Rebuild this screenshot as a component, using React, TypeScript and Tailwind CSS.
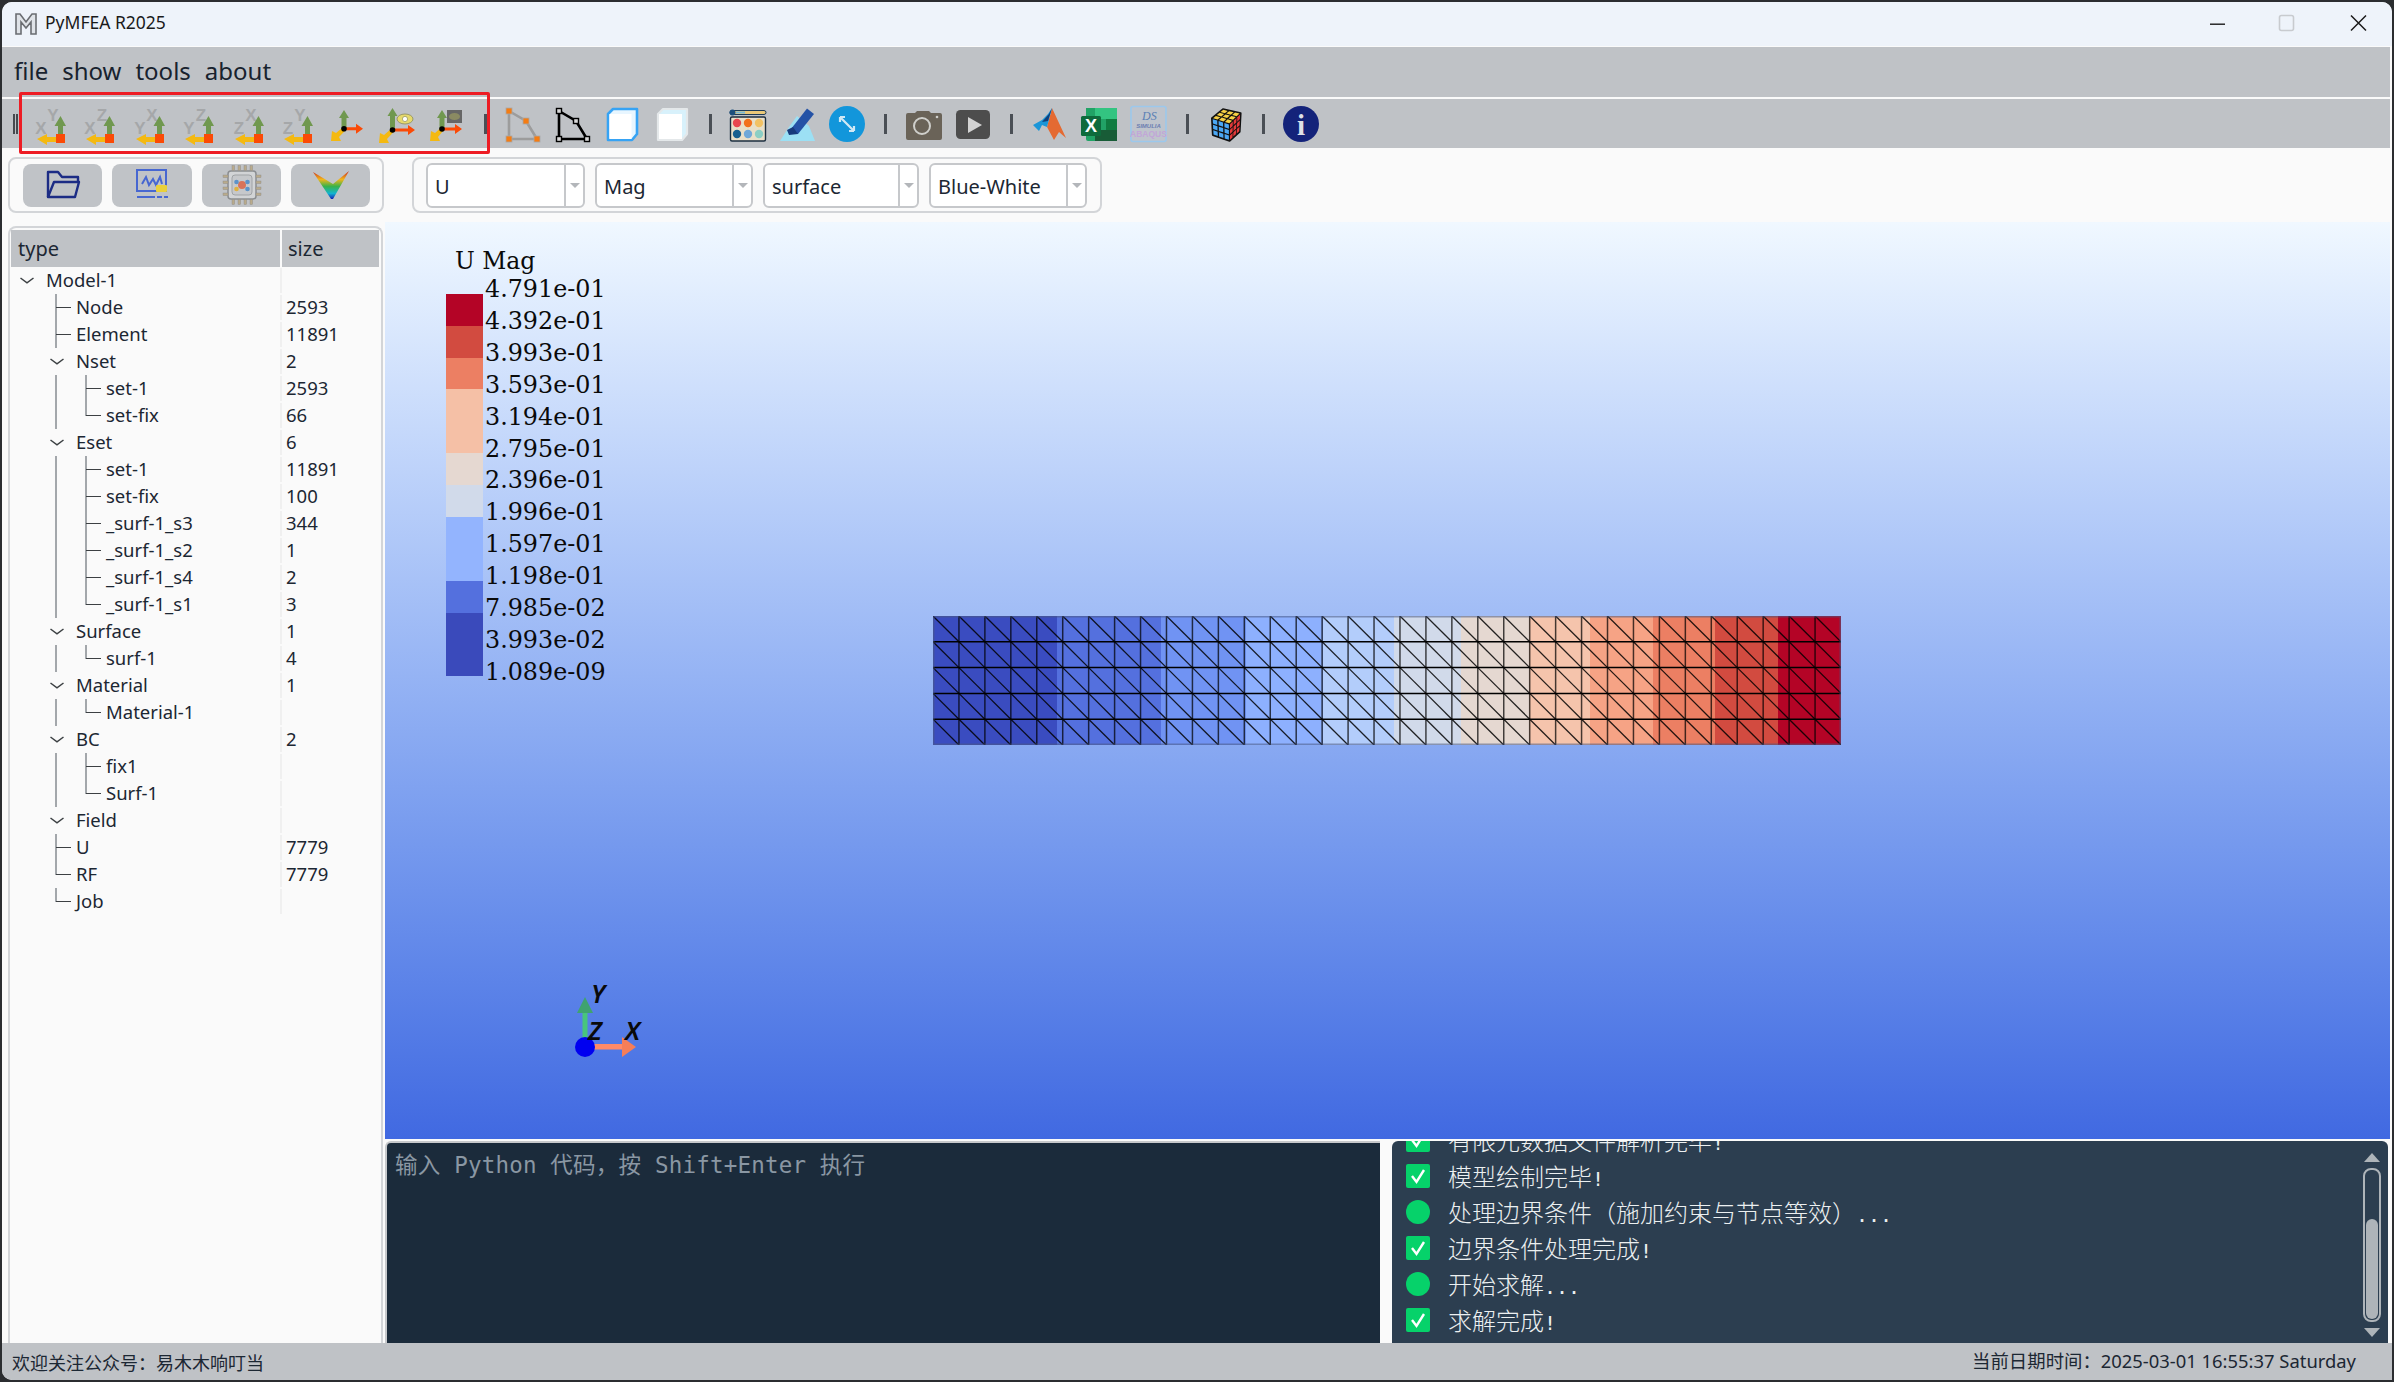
import React from "react";

type Cell = "e" | "v" | "t" | "l" | "o";
const TREE: [string, string, Cell[]][] = [
  ["Model-1", "", ["o"]],
  ["Node", "2593", ["e", "t"]],
  ["Element", "11891", ["e", "t"]],
  ["Nset", "2", ["e", "o"]],
  ["set-1", "2593", ["e", "v", "t"]],
  ["set-fix", "66", ["e", "v", "l"]],
  ["Eset", "6", ["e", "o"]],
  ["set-1", "11891", ["e", "v", "t"]],
  ["set-fix", "100", ["e", "v", "t"]],
  ["_surf-1_s3", "344", ["e", "v", "t"]],
  ["_surf-1_s2", "1", ["e", "v", "t"]],
  ["_surf-1_s4", "2", ["e", "v", "t"]],
  ["_surf-1_s1", "3", ["e", "v", "l"]],
  ["Surface", "1", ["e", "o"]],
  ["surf-1", "4", ["e", "v", "l"]],
  ["Material", "1", ["e", "o"]],
  ["Material-1", "", ["e", "v", "l"]],
  ["BC", "2", ["e", "o"]],
  ["fix1", "", ["e", "v", "t"]],
  ["Surf-1", "", ["e", "v", "l"]],
  ["Field", "", ["e", "o"]],
  ["U", "7779", ["e", "t"]],
  ["RF", "7779", ["e", "l"]],
  ["Job", "", ["e", "l"]],
];

function Branch({ k }: { k: Cell }) {
  return (
    <svg width="30" height="27" className="shrink-0">
      {k === "o" && <path d="M9.5 11L16 15.8L22.5 11" fill="none" stroke="#3c4043" strokeWidth="1.5" />}
      {(k === "v" || k === "t") && <rect x="14" y="0" width="2" height="27" fill="#a3a7ab" />}
      {k === "l" && <rect x="14" y="0" width="2" height="14" fill="#a3a7ab" />}
      {(k === "t" || k === "l") && <rect x="15" y="13" width="15" height="1" fill="#3c4043" />}
    </svg>
  );
}

function TreeRow({ label, size, cells }: { label: string; size: string; cells: Cell[] }) {
  return (
    <div className="flex h-[27px] items-center text-[18.5px] text-[#1c2733]">
      <div className="flex h-full w-[269px] items-center">
        {cells.map((c, i) => (
          <Branch key={i} k={c} />
        ))}
        <span className="pl-[5px] leading-none">{label}</span>
      </div>
      <div className="h-[25px] w-[2px] bg-[#f0f0f0]" />
      <span className="pl-[4px] leading-none">{size}</span>
    </div>
  );
}

const AXES: [string, string][] = [
  ["Y", "X"],
  ["Z", "X"],
  ["X", "Y"],
  ["Z", "Y"],
  ["X", "Z"],
  ["Y", "Z"],
];

function AxisPlane({ top, left }: { top: string; left: string }) {
  return (
    <svg width="44" height="44" viewBox="0 0 44 44">
      <text x="24" y="19" textAnchor="middle" fontSize="17" fontWeight="700" fill="#a5a7a9" fontFamily="Liberation Sans">{top}</text>
      <text x="12" y="32" textAnchor="middle" fontSize="17" fontWeight="700" fill="#a5a7a9" fontFamily="Liberation Sans">{left}</text>
      <path d="M29 36V24H25.5L31.5 14L37 24H34V36Z" fill="#70984f" />
      <path d="M8 37L18 32V35H30V40H18V43Z" fill="#f4b911" />
      <rect x="27" y="32" width="9" height="9" fill="#fb4a06" />
    </svg>
  );
}

function Triad({ ox, oy, up = 8, rx = 37, dx = 5, dy = 39 }: { ox: number; oy: number; up?: number; rx?: number; dx?: number; dy?: number }) {
  return (
    <>
      <path d={`M${ox - 2.5} ${oy}V${up + 8}H${ox - 5}L${ox} ${up}L${ox + 5} ${up + 8}H${ox + 2.5}V${oy}Z`} fill="#70984f" />
      <path d={`M${ox} ${oy - 1.5}H${rx - 7}V${oy - 5}L${rx} ${oy}L${rx - 7} ${oy + 5}V${oy + 1.5}H${ox}Z`} fill="#fb4a06" />
      <path d={`M${ox - 1} ${oy - 1.5}L${dx + 5} ${dy - 8}L${dx + 1} ${dy - 10}L${dx} ${dy}L${dx + 10} ${dy}L${dx + 8} ${dy - 4}L${ox + 1.5} ${oy + 1.5}Z`} fill="#f4b911" />
      <circle cx={ox} cy={oy} r="2.8" fill="#000" />
    </>
  );
}

function Square({ x, y, black }: { x: number; y: number; black?: boolean }) {
  return black ? (
    <rect x={x - 2.5} y={y - 2.5} width="5" height="5" fill="#d8d8d8" stroke="#000" strokeWidth="1.4" />
  ) : (
    <rect x={x - 3} y={y - 3} width="6" height="6" fill="#f57c12" stroke="#a8a8a8" strokeWidth="0.8" />
  );
}

function Svg({ children }: { children: React.ReactNode }) {
  return (
    <svg width="44" height="44" viewBox="0 0 44 44">
      {children}
    </svg>
  );
}

type P = [number, number];
function Face({ a, b, c, d, fill }: { a: P; b: P; c: P; d: P; fill: string }) {
  // a-b top edge, d-c bottom edge; a 3x3 grid of stickers
  const at = (u: number, v: number): string => {
    const x = (1 - v) * ((1 - u) * a[0] + u * b[0]) + v * ((1 - u) * d[0] + u * c[0]);
    const y = (1 - v) * ((1 - u) * a[1] + u * b[1]) + v * ((1 - u) * d[1] + u * c[1]);
    return `${x.toFixed(1)},${y.toFixed(1)}`;
  };
  const cells: React.ReactNode[] = [];
  const g = 0.04;
  for (let i = 0; i < 3; i++)
    for (let j = 0; j < 3; j++) {
      const u0 = i / 3 + g, u1 = (i + 1) / 3 - g, v0 = j / 3 + g, v1 = (j + 1) / 3 - g;
      cells.push(<polygon key={`${i}${j}`} points={`${at(u0, v0)} ${at(u1, v0)} ${at(u1, v1)} ${at(u0, v1)}`} fill={fill} />);
    }
  return <>{cells}</>;
}

const POLY = "8,9 25,19 36,37 8,37";

const ICON1 = (
  <Svg>
    <polygon points={POLY} fill="none" stroke="#9c9c9c" strokeWidth="2.6" />
    <Square x={8} y={9} /><Square x={25} y={19} /><Square x={36} y={37} /><Square x={8} y={37} />
  </Svg>
);
const ICON2 = (
  <Svg>
    <polygon points={POLY} fill="none" stroke="#000" strokeWidth="2.6" />
    <Square x={8} y={9} black /><Square x={25} y={19} black /><Square x={36} y={37} black /><Square x={8} y={37} black />
  </Svg>
);
const ICON3 = (
  <Svg>
    <path d="M8 12L13 7H37V32L32 38H8Z" fill="#e8f6ff" stroke="#36a3f4" strokeWidth="2.6" strokeLinejoin="round" />
    <rect x="9.5" y="12" width="22" height="25" fill="#fff" />
  </Svg>
);
const ICON4 = (
  <Svg>
    <path d="M8 12L13 7H37V32L32 38H8Z" fill="#d8f1fb" stroke="#e4e8ea" strokeWidth="2.2" strokeLinejoin="round" />
    <rect x="9" y="12" width="23" height="25" fill="#fff" />
  </Svg>
);
const ICON5 = (
  <Svg>
    <rect x="4" y="8.5" width="36" height="4" rx="2" fill="#e9c878" stroke="#1c3b57" strokeWidth="1" />
    <circle cx="6.5" cy="10.5" r="3" fill="#1c4f7d" />
    <rect x="10" y="9.5" width="9" height="2" fill="#77b7d6" />
    <rect x="4.5" y="15" width="35" height="24" rx="1.5" fill="#e8dfc8" stroke="#1c2f40" strokeWidth="1.4" />
    <circle cx="11" cy="21" r="4.2" fill="#e8474f" /><circle cx="22" cy="21" r="4.2" fill="#f2711c" /><circle cx="33" cy="21" r="4.2" fill="#f2c264" />
    <circle cx="11" cy="32" r="4.2" fill="#18608f" /><circle cx="22" cy="32" r="4.2" fill="#6fa8d8" /><circle cx="33" cy="32" r="4.2" fill="#8ccfc4" />
  </Svg>
);
const ICON6 = (
  <Svg>
    <path d="M13 25L21 14L33 24L39 39H4Z" fill="#9ce0f4" />
    <path d="M15 27L31 6.5L38 12L22 32L15 32Z" fill="#2452a6" />
    <path d="M11 28L17 25L22 32L13 33Z" fill="#173a7c" />
  </Svg>
);
const ICON7 = (
  <Svg>
    <ellipse cx="22" cy="22" rx="18" ry="18" fill="#1296db" />
    <path d="M15 15L29 29M15 15V20M15 15H20M29 29V24M29 29H24" fill="none" stroke="#cfe8f5" strokeWidth="2.2" />
  </Svg>
);
const ICON8 = (
  <Svg>
    <path d="M4 13Q4 11 6 11H13L15 9H27L29 11H38Q40 11 40 13V36Q40 38 38 38H6Q4 38 4 36Z" fill="#6a6358" />
    <circle cx="20" cy="24" r="8" fill="none" stroke="#cfcfcb" strokeWidth="2" />
    <circle cx="35" cy="15" r="1.3" fill="#cfcfcb" />
  </Svg>
);
const ICON9 = (
  <Svg>
    <rect x="5" y="8" width="34" height="29" rx="4.5" fill="#4d4d4d" />
    <path d="M17 15L31 23L17 31Z" fill="#d3d3d3" />
  </Svg>
);
const ICON10 = (
  <Svg>
    <path d="M24 6L38 36L31 30L26 38L19 25Z" fill="#e46a32" />
    <path d="M5 23L14 18L20 12L24 6L19 25L14 23L11 29Z" fill="#1b96d8" />
    <path d="M14 20L21 12L24 6L20 19Z" fill="#103f7c" />
  </Svg>
);
const ICON11 = (
  <Svg>
    <path d="M9 6H38Q40 6 40 8V37Q40 39 38 39H11Q9 39 9 37Z" fill="#21a366" />
    <rect x="18" y="6" width="22" height="11" fill="#33c481" />
    <rect x="18" y="28" width="22" height="11" fill="#185c37" />
    <rect x="29" y="17" width="11" height="11" fill="#107c41" />
    <rect x="4" y="14" width="20" height="20" rx="1.5" fill="#0e6b3c" />
    <text x="14" y="30" textAnchor="middle" fontSize="18" fontWeight="700" fill="#fff" fontFamily="Liberation Sans">X</text>
  </Svg>
);
const ICON12 = (
  <Svg>
    <rect x="4" y="4.5" width="35" height="35" rx="2" fill="#bfc4cc" stroke="#9cc8ec" strokeWidth="1.6" />
    <text x="15" y="18" fontSize="12" fontStyle="italic" fill="#5a7fb5" fontFamily="Liberation Serif">DS</text>
    <text x="21.5" y="26" textAnchor="middle" fontSize="6" fontStyle="italic" fontWeight="700" fill="#6c7fb2" fontFamily="Liberation Sans">SIMULIA</text>
    <text x="21.5" y="35" textAnchor="middle" fontSize="8.5" fontWeight="700" fill="#c2a6d8" fontFamily="Liberation Sans">ABAQUS</text>
  </Svg>
);
const ICON13 = (
  <Svg>
    <polygon points="9,16.3 20,7.3 37.6,11.3 36.6,29.7 26.6,38.7 9.9,33" fill="#111" stroke="#111" strokeWidth="2" strokeLinejoin="round" />
    <Face a={[20, 7.3]} b={[37.6, 11.3]} c={[26.6, 22]} d={[9, 16.3]} fill="#f5cf45" />
    <Face a={[9, 16.3]} b={[26.6, 22]} c={[26.6, 38.7]} d={[9.9, 33]} fill="#4ba8f5" />
    <Face a={[26.6, 22]} b={[37.6, 11.3]} c={[36.6, 29.7]} d={[26.6, 38.7]} fill="#e5393a" />
  </Svg>
);
const ICON14 = (
  <Svg>
    <circle cx="21" cy="22" r="18" fill="#14237a" />
    <text x="21" y="33" textAnchor="middle" fontSize="29" fontWeight="700" fill="#dfe1e8" fontFamily="Liberation Serif">i</text>
  </Svg>
);

function TB({ children }: { children: React.ReactNode }) {
  return <div className="flex h-full w-[49.5px] shrink-0 items-center justify-center">{children}</div>;
}
function Sep({ w = "w-[27px]" }: { w?: string }) {
  return (
    <div className={`flex h-full shrink-0 items-center justify-center ${w}`}>
      <div className="h-[20px] w-[3px] bg-[#4a4f55]" />
    </div>
  );
}

function Combo({ label, w }: { label: string; w: string }) {
  return (
    <div className={`flex h-[45px] items-center rounded-[6px] border-2 border-[#c6c8cb] bg-white ${w}`}>
      <span className="flex-1 pl-[7px] pt-[3px] text-[20px] leading-none text-[#1c2733]">{label}</span>
      <div className="flex h-full w-[19px] items-center justify-center border-l-2 border-[#c6c8cb]">
        <div className="h-0 w-0 border-x-[5px] border-t-[5px] border-x-transparent border-t-[#b3b6ba]" />
      </div>
    </div>
  );
}

function SideBtn({ w, children }: { w: string; children: React.ReactNode }) {
  return <div className={`flex h-[43px] items-center justify-center rounded-[8px] bg-[#c0c3c7] ${w}`}>{children}</div>;
}

const BANDS: [number, number, string][] = [
  [933, 1057, "#3a4cc0"],
  [1057, 1161, "#5470de"],
  [1161, 1246, "#7093f3"],
  [1246, 1323, "#8db0fe"],
  [1323, 1394, "#b3cdfb"],
  [1394, 1461, "#d1daea"],
  [1461, 1529, "#e5d8d1"],
  [1529, 1590, "#f5c4ac"],
  [1590, 1653, "#f6a385"],
  [1653, 1715, "#ec7f63"],
  [1715, 1778, "#d24b40"],
  [1778, 1841, "#b40426"],
];

function Mesh() {
  const cols = 35;
  const rows = 5;
  const W = 908;
  const H = 129;
  const cw = W / cols;
  const ch = H / rows;
  const lines: React.ReactNode[] = [];
  for (let i = 1; i < cols; i++) lines.push(<line key={`v${i}`} x1={i * cw} y1={0} x2={i * cw} y2={H} stroke="#000" strokeOpacity="0.72" strokeWidth="1.5" />);
  for (let j = 1; j < rows; j++) lines.push(<line key={`h${j}`} x1={0} y1={j * ch} x2={W} y2={j * ch} stroke="#000" strokeWidth="1.5" />);
  for (let i = 0; i < cols; i++)
    for (let j = 0; j < rows; j++)
      lines.push(<line key={`d${i}-${j}`} x1={i * cw} y1={j * ch} x2={(i + 1) * cw} y2={(j + 1) * ch} stroke="#000" strokeOpacity="0.85" strokeWidth="1.3" />);
  return (
    <svg width={W} height={H} viewBox={`0 0 ${W} ${H}`} className="absolute left-[548px] top-[394px]">
      {BANDS.map(([a, b, c]) => (
        <rect key={a} x={a - 933} y={0} width={b - a + 0.5} height={H} fill={c} />
      ))}
      {lines}
      <rect x="0.75" y="0.75" width={W - 1.5} height={H - 1.5} fill="none" stroke="#4a5a80" strokeOpacity="0.55" strokeWidth="1.5" />
    </svg>
  );
}

const LEG = ["4.791e-01", "4.392e-01", "3.993e-01", "3.593e-01", "3.194e-01", "2.795e-01", "2.396e-01", "1.996e-01", "1.597e-01", "1.198e-01", "7.985e-02", "3.993e-02", "1.089e-09"];
const LEGC: [string, string][] = [
  ["#b40426", "h-[32px]"],
  ["#d24b40", "h-[32px]"],
  ["#ec7f63", "h-[31px]"],
  ["#f5c0a6", "h-[64px]"],
  ["#e5d8d1", "h-[32px]"],
  ["#d1daea", "h-[32px]"],
  ["#93b4fe", "h-[64px]"],
  ["#5470de", "h-[32px]"],
  ["#3a4abb", "h-[63px]"],
];

function Legend() {
  return (
    <>
      <div className="absolute left-[70px] top-[24px] font-['DejaVu_Serif',serif] text-[23.5px] leading-[30px] text-[#0a0a0a]">U Mag</div>
      <div className="absolute left-[61px] top-[72px] flex w-[37px] flex-col">
        {LEGC.map(([c, h], i) => (
          <div key={i} className={h} style={{ backgroundColor: c }} />
        ))}
      </div>
      <div className="absolute left-[100px] top-[52px] flex flex-col font-['DejaVu_Serif',serif] text-[23.8px] text-[#0a0a0a]">
        {LEG.map((t) => (
          <div key={t} className="flex h-[31.9px] items-center leading-none">{t}</div>
        ))}
      </div>
    </>
  );
}

function Triad3D() {
  return (
    <svg width="90" height="90" viewBox="0 0 90 90" className="absolute left-[180px] top-[762px] overflow-visible">
      <rect x="17.5" y="28" width="5" height="34" fill="#48c47c" />
      <path d="M12 29L20 13L28 29Z" fill="#3fa36f" />
      <rect x="25" y="60" width="35" height="5.5" fill="#ff8a68" />
      <path d="M57 53L71 63L57 73Z" fill="#f67e58" />
      <circle cx="20" cy="63" r="10" fill="#0000f0" />
      <text x="26" y="19" fontSize="26" fontStyle="italic" fontWeight="600" fill="#0a0a0a" fontFamily="Noto Sans">Y</text>
      <text x="23" y="56" fontSize="26" fontStyle="italic" fontWeight="600" fill="#0a0a0a" fontFamily="Noto Sans">Z</text>
      <text x="60" y="56" fontSize="26" fontStyle="italic" fontWeight="600" fill="#0a0a0a" fontFamily="Noto Sans">X</text>
    </svg>
  );
}

function Check() {
  return (
    <svg width="24" height="24" viewBox="0 0 24 24" className="shrink-0">
      <rect width="24" height="24" rx="2" fill="#06d26a" />
      <path d="M6 12L10.5 18L18 6" fill="none" stroke="#fff" strokeWidth="2.4" />
    </svg>
  );
}
function Dot() {
  return <div className="h-[24px] w-[24px] shrink-0 rounded-full bg-[#06d26a]" />;
}

const LOG: [boolean, string, string][] = [
  [true, "有限元数据文件解析完毕", "!"],
  [true, "模型绘制完毕", "!"],
  [false, "处理边界条件（施加约束与节点等效）", "..."],
  [true, "边界条件处理完成", "!"],
  [false, "开始求解", "..."],
  [true, "求解完成", "!"],
];

export default function App() {
  return (
    <div className="h-[1382px] w-[2394px] overflow-hidden bg-[#2b2d30] pb-[2px] pl-[2px] pr-[2px] pt-[2px] font-['Noto_Sans','Noto_Sans_CJK_SC',sans-serif]">
      <div className="flex h-full w-full flex-col overflow-hidden rounded-t-[10px] rounded-bl-[10px] bg-[#fafafa]">
        {/* title bar */}
        <div className="flex h-[44px] shrink-0 items-center bg-[#eef3fa]">
          <svg width="24" height="24" viewBox="0 0 24 24" className="ml-[12px]">
            <path d="M2 22V2H6L12 10L18 2H22V22H17V10L12 16L7 10V22Z" fill="#dfe3e8" stroke="#6a6d72" strokeWidth="1.6" />
          </svg>
          <span className="mb-[2px] ml-[7px] text-[17.5px] leading-none text-[#1a1a1a]">PyMFEA R2025</span>
          <div className="flex-1" />
          <svg width="184" height="44" viewBox="0 0 184 44" className="mr-[22px]">
            <rect x="24" y="21.5" width="15" height="1.4" fill="#1a1a1a" />
            <rect x="93.5" y="13.5" width="14" height="15" rx="2" fill="none" stroke="#c8cbcf" strokeWidth="1.6" />
            <path d="M165 13.5L180 28.5M180 13.5L165 28.5" stroke="#1a1a1a" strokeWidth="1.5" />
          </svg>
        </div>
        {/* menu */}
        <div className="mr-[2px] mt-[1px] flex h-[50px] shrink-0 items-center gap-[14px] bg-[#bfc2c6] pb-[2px] pl-[12px] text-[24px] leading-none text-[#18222e]">
          <span>file</span>
          <span>show</span>
          <span>tools</span>
          <span>about</span>
        </div>
        {/* toolbar */}
        <div className="relative mr-[2px] mt-[2px] flex h-[49px] shrink-0 items-center bg-[#bfc2c6]">
          <div className="flex h-full w-[24px] shrink-0 items-center gap-[1px] pl-[11px]">
            <div className="h-[20px] w-[2px] bg-[#45494e]" />
            <div className="h-[20px] w-[2px] bg-[#45494e]" />
          </div>
          {AXES.map(([t, l]) => (
            <TB key={t + l}><AxisPlane top={t} left={l} /></TB>
          ))}
          <TB><Svg><Triad ox={18} oy={26.7} /></Svg></TB>
          <TB>
            <Svg>
              <Triad ox={17.5} oy={28} up={6} rx={40} dx={4} dy={41} />
              <ellipse cx="30" cy="17" rx="8" ry="5" fill="#e6d96c" stroke="#8a8a5a" strokeWidth="0.8" />
              <circle cx="30" cy="17" r="2.6" fill="#fff" stroke="#9a9a60" strokeWidth="0.8" />
            </Svg>
          </TB>
          <TB>
            <Svg>
              <Triad ox={17} oy={27} />
              <rect x="22" y="8" width="15" height="13" fill="#666" />
              <ellipse cx="29.5" cy="14.5" rx="5.5" ry="3.6" fill="#8a8a62" />
            </Svg>
          </TB>
          <Sep w="w-[27px]" />
          <TB>{ICON1}</TB>
          <TB>{ICON2}</TB>
          <TB>{ICON3}</TB>
          <TB>{ICON4}</TB>
          <Sep />
          <TB>{ICON5}</TB>
          <TB>{ICON6}</TB>
          <TB>{ICON7}</TB>
          <Sep />
          <TB>{ICON8}</TB>
          <TB>{ICON9}</TB>
          <Sep />
          <TB>{ICON10}</TB>
          <TB>{ICON11}</TB>
          <TB>{ICON12}</TB>
          <Sep />
          <TB>{ICON13}</TB>
          <Sep />
          <TB>{ICON14}</TB>
          {/* red annotation rectangle */}
          <div className="absolute left-[17px] top-[-7px] h-[62px] w-[471px] rounded-[2px] border-[3px] border-[#ed1c24]" />
        </div>
        {/* controls strip */}
        <div className="flex h-[74px] shrink-0 items-center pl-[6px]">
          <div className="flex h-[56px] w-[376px] items-center gap-[10px] rounded-[8px] border-2 border-[#d3d5d8] pl-[13px]">
            <SideBtn w="w-[79px]">
              <svg width="36" height="32" viewBox="0 0 36 32" fill="none" stroke="#1c2c85" strokeWidth="2.4" strokeLinejoin="round">
                <path d="M3 28V3H13L17 8H33V13" />
                <path d="M3 28L9 13H34L30 28Z" />
              </svg>
            </SideBtn>
            <SideBtn w="w-[80px]">
              <svg width="36" height="34" viewBox="0 0 36 34">
                <rect x="3" y="2" width="29" height="21" fill="none" stroke="#4767d1" strokeWidth="2" />
                <path d="M8 16L12 9L15 17L19 11L22 17L26 9L28 16" fill="none" stroke="#4767d1" strokeWidth="2" />
                <rect x="22" y="17" width="11" height="7" rx="1" fill="#ead03a" />
                <rect x="3" y="28" width="18" height="2" fill="#4767d1" />
                <rect x="23" y="28" width="5" height="2" fill="#4767d1" />
                <rect x="30" y="28" width="4" height="2" fill="#4767d1" />
              </svg>
            </SideBtn>
            <SideBtn w="w-[79px]">
              <svg width="40" height="42" viewBox="0 0 40 42">
                <rect x="6" y="7" width="28" height="28" rx="3" fill="#d2d4d6" stroke="#8a8d90" strokeWidth="1.5" />
                <rect x="10" y="11" width="20" height="20" rx="3" fill="#c6c8cb" stroke="#a0a3a6" />
                {[0, 1, 2, 3].map((i) => (
                  <React.Fragment key={i}>
                    <rect x={10 + i * 6} y="1.5" width="2.6" height="5" fill="#b9ab8b" stroke="#888" strokeWidth="0.4" />
                    <rect x={10 + i * 6} y="35.5" width="2.6" height="5" fill="#b9ab8b" stroke="#888" strokeWidth="0.4" />
                    <rect x="1" y={11 + i * 6} width="5" height="2.6" fill="#b9ab8b" stroke="#888" strokeWidth="0.4" />
                    <rect x="34" y={11 + i * 6} width="5" height="2.6" fill="#b9ab8b" stroke="#888" strokeWidth="0.4" />
                  </React.Fragment>
                ))}
                <circle cx="20" cy="21" r="4" fill="#d8735a" />
                <circle cx="14.5" cy="18" r="2.3" fill="#5c93c9" />
                <circle cx="25.5" cy="18" r="2.3" fill="#5c93c9" />
                <circle cx="14.5" cy="25" r="2.3" fill="#e0b13f" />
                <circle cx="25.5" cy="25" r="2.3" fill="#5c93c9" />
              </svg>
            </SideBtn>
            <SideBtn w="w-[79px]">
              <svg width="38" height="30" viewBox="0 0 38 30">
                <defs>
                  <linearGradient id="vg" x1="0" y1="0" x2="0" y2="1">
                    <stop offset="0" stopColor="#c8281e" />
                    <stop offset="0.3" stopColor="#f2b51c" />
                    <stop offset="0.55" stopColor="#37b34a" />
                    <stop offset="0.8" stopColor="#13b5cf" />
                    <stop offset="1" stopColor="#1020b8" />
                  </linearGradient>
                </defs>
                <path d="M1 2L21 14L37 1L21 29H19Z" fill="url(#vg)" />
              </svg>
            </SideBtn>
          </div>
          <div className="ml-[28px] flex h-[56px] w-[690px] items-center gap-[10px] rounded-[8px] border-2 border-[#d3d5d8] pl-[12px]">
            <Combo label="U" w="w-[159px]" />
            <Combo label="Mag" w="w-[158px]" />
            <Combo label="surface" w="w-[156px]" />
            <Combo label="Blue-White" w="w-[158px]" />
          </div>
        </div>
        {/* main */}
        <div className="mr-[2px] flex min-h-0 flex-1">
          <div className="w-[383px] shrink-0 pl-[6px] pt-[4px]">
            <div className="h-full w-[375px] rounded-t-[8px] border-x-2 border-t-2 border-[#d3d5d8] pl-[1px] pt-[2px]">
              <div className="flex h-[37px] gap-[2px] text-[20px] leading-none text-[#1c2733]">
                <div className="flex w-[269px] items-center bg-[#bfc2c6] pl-[7px]">type</div>
                <div className="flex w-[97px] items-center bg-[#bfc2c6] pl-[6px]">size</div>
              </div>
              {TREE.map((r, i) => (
                <TreeRow key={i} label={r[0]} size={r[1]} cells={r[2]} />
              ))}
            </div>
          </div>
          <div className="flex min-w-0 flex-1 flex-col">
            <div className="relative flex-1 bg-gradient-to-b from-[#f0f8ff] to-[#4169e1]">
              <Legend />
              <Mesh />
              <Triad3D />
            </div>
            <div className="mt-[2px] flex h-[202px] shrink-0">
              <div className="w-[995px] rounded-tl-[6px] border-l-2 border-t-2 border-[#c6c8cb] bg-[#1b2b3b] pl-[8px] pt-[9px] font-['DejaVu_Sans_Mono','Noto_Sans_CJK_SC',monospace] text-[22.5px] leading-[26px] tracking-[0.2px] text-[#8a97a3]">
                输入 Python 代码，按 Shift+Enter 执行
              </div>
              <div className="ml-[12px] flex w-[996px] overflow-hidden rounded-t-[6px] bg-[#2c3e50]">
                <div className="mt-[-19px] flex-1 pl-[14px]">
                  {LOG.map(([ok, t, tail], i) => (
                    <div key={i} className="flex h-[36px] items-center gap-[18px]">
                      {ok ? <Check /> : <Dot />}
                      <span className="font-['Noto_Sans_CJK_SC',sans-serif] text-[24px] font-light leading-none text-[#ecf0f1]">
                        {t}
                        <span className="font-['DejaVu_Sans_Mono',monospace] text-[20px]">{tail}</span>
                      </span>
                    </div>
                  ))}
                </div>
                <div className="flex w-[25px] shrink-0 flex-col items-center pr-[7px] pt-[12px]">
                  <div className="h-0 w-0 border-x-[8px] border-b-[9px] border-x-transparent border-b-[#aeb4b9]" />
                  <div className="mt-[6px] flex h-[154px] w-[18px] flex-col justify-end rounded-[8px] border-2 border-[#aeb4b9] p-px">
                    <div className="h-[100px] w-full rounded-[6px] bg-[#aeb4b9]" />
                  </div>
                  <div className="mt-[6px] h-0 w-0 border-x-[8px] border-t-[9px] border-x-transparent border-t-[#aeb4b9]" />
                </div>
              </div>
            </div>
          </div>
        </div>
        {/* status */}
        <div className="flex h-[37px] shrink-0 items-center justify-between bg-[#bfc2c6] pl-[10px] pr-[36px] text-[18.4px] leading-none text-[#1c2733]">
          <span className="font-['Noto_Sans_CJK_SC',sans-serif] text-[18px]">欢迎关注公众号：易木木响叮当</span>
          <span>当前日期时间：2025-03-01 16:55:37 Saturday</span>
        </div>
      </div>
    </div>
  );
}
